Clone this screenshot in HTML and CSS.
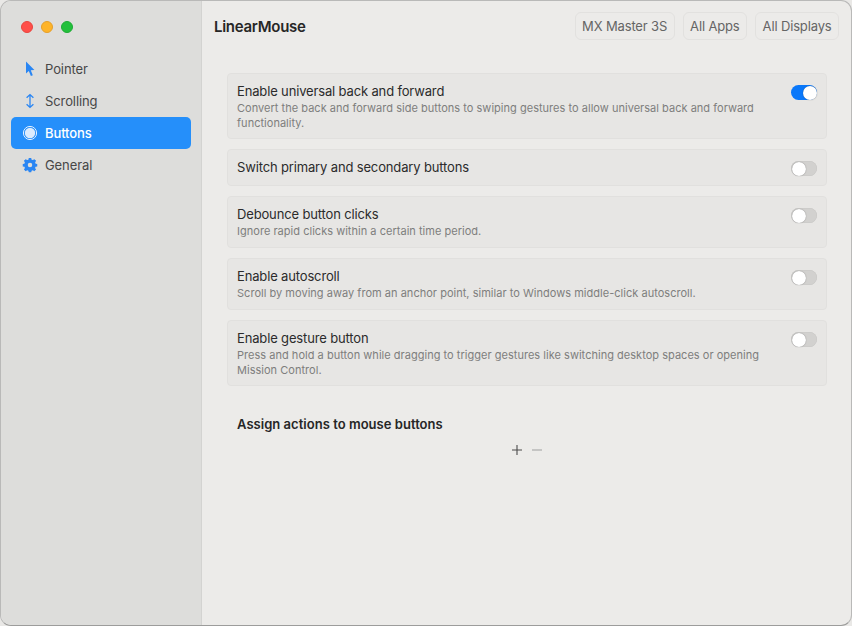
FILE: index.html
```html
<!DOCTYPE html>
<html lang="en">
<head>
<meta charset="utf-8">
<title>LinearMouse</title>
<link rel="stylesheet" href="styles.css">
</head>
<body>
<div class="window">
  <aside class="sidebar">
    <div class="lights">
      <span class="light red"></span>
      <span class="light yellow"></span>
      <span class="light green"></span>
    </div>
    <nav class="nav">
      <div class="nav-item">
        <svg class="nav-icon" viewBox="0 0 16 16"><path class="fill" d="M4 .6 L4 12.4 L6.8 9.9 L8.9 15 L10.8 14.2 L8.8 9.3 L12.4 9 Z"/></svg>
        <span>Pointer</span>
      </div>
      <div class="nav-item">
        <svg class="nav-icon" viewBox="0 0 16 16"><path class="stroke" d="M8 1.6 V14.4 M4.6 4.8 L8 1.6 L11.4 4.8 M4.6 11.2 L8 14.4 L11.4 11.2"/></svg>
        <span>Scrolling</span>
      </div>
      <div class="nav-item active">
        <svg class="nav-icon" viewBox="0 0 16 16"><circle class="ring" cx="8" cy="8" r="6.6"/><circle class="dot" cx="8" cy="8" r="5.2"/></svg>
        <span>Buttons</span>
      </div>
      <div class="nav-item">
        <svg class="nav-icon" viewBox="-.5 -.4 17 17"><path class="fill" fill-rule="evenodd" d="M6.7 .6 H9.3 L9.7 2.4 L11 2.9 L12.7 1.9 L14.5 3.7 L13.4 5.4 L14 6.7 L15.7 7.1 V9.6 L13.9 10 L13.4 11.2 L14.4 12.9 L12.6 14.7 L11 13.6 L9.7 14.1 L9.3 15.8 H6.7 L6.3 14.1 L5 13.6 L3.4 14.7 L1.6 12.9 L2.6 11.2 L2.1 10 L.3 9.6 V7.1 L2 6.7 L2.6 5.4 L1.5 3.7 L3.3 1.9 L5 2.9 L6.3 2.4 Z M8 5.8 A2.4 2.4 0 1 0 8 10.6 A2.4 2.4 0 1 0 8 5.8 Z"/></svg>
        <span>General</span>
      </div>
    </nav>
  </aside>
  <main class="main">
    <header class="toolbar">
      <h1 class="app-title">LinearMouse</h1>
      <div class="pickers">
        <div class="picker">MX Master 3S</div>
        <div class="picker">All Apps</div>
        <div class="picker">All Displays</div>
      </div>
    </header>
    <section class="content">
      <div class="card tall">
        <div class="card-text">
          <div class="card-title">Enable universal back and forward</div>
          <div class="card-desc">Convert the back and forward side buttons to swiping gestures to allow universal back and forward functionality.</div>
        </div>
        <span class="switch on"><span class="knob"></span></span>
      </div>
      <div class="card single">
        <div class="card-text">
          <div class="card-title">Switch primary and secondary buttons</div>
        </div>
        <span class="switch"><span class="knob"></span></span>
      </div>
      <div class="card">
        <div class="card-text">
          <div class="card-title">Debounce button clicks</div>
          <div class="card-desc">Ignore rapid clicks within a certain time period.</div>
        </div>
        <span class="switch"><span class="knob"></span></span>
      </div>
      <div class="card">
        <div class="card-text">
          <div class="card-title">Enable autoscroll</div>
          <div class="card-desc">Scroll by moving away from an anchor point, similar to Windows middle-click autoscroll.</div>
        </div>
        <span class="switch"><span class="knob"></span></span>
      </div>
      <div class="card tall">
        <div class="card-text">
          <div class="card-title">Enable gesture button</div>
          <div class="card-desc">Press and hold a button while dragging to trigger gestures like switching desktop spaces or opening Mission Control.</div>
        </div>
        <span class="switch"><span class="knob"></span></span>
      </div>
      <div class="assign">
        <h2 class="assign-title">Assign actions to mouse buttons</h2>
        <div class="assign-tools">
          <svg class="tool" viewBox="0 0 12 12"><path class="tool-plus" d="M0 6 H12 M6 0 V12"/></svg>
          <svg class="tool" viewBox="0 0 12 12"><path class="tool-minus" d="M0 6 H12"/></svg>
        </div>
      </div>
    </section>
  </main>
</div>
</body>
</html>
```
FILE: styles.css
```css
* { box-sizing: border-box; }
html, body { margin: 0; height: 100%; background: #e9e8e6; }
body { font-family: Inter, "Liberation Sans", sans-serif; overflow: hidden; }
.window {
  width: 852px; height: 626px; display: flex; overflow: hidden;
  border-radius: 11px; border: 1px solid #b9b9b8; border-bottom-color: #9c9c9b;
  background: #ecebe9;
}
.sidebar {
  width: 201px; flex: none; background: #dddddb;
  border-right: 1px solid #d3d3d1; padding: 0 10px;
}
.lights { height: 52px; display: flex; gap: 8px; padding: 20px 0 0 10px; }
.light { width: 12px; height: 12px; border-radius: 50%; border: 1px solid; }
.red { background: #ff4f4a; border-color: #e8453f; }
.yellow { background: #feb429; border-color: #e59f2b; }
.green { background: #23c03c; border-color: #1eab35; }
.nav { display: flex; flex-direction: column; }
.nav-item {
  height: 32px; display: flex; align-items: center; gap: 7px; padding: 0 11px;
  border-radius: 5px; font-size: 13px; font-weight: 400; color: #474747;
  letter-spacing: -.1px;
}
.nav-icon { width: 16px; height: 16px; flex: none; }
.fill { fill: #2a86f3; }
.stroke { fill: none; stroke: #2a86f3; stroke-width: 1.3; }
.active { background: #258ffa; color: #fff; font-weight: 500; }
.ring { fill: none; stroke: #e4f0fe; stroke-width: 1; }
.dot { fill: #dcebfd; }
.main { flex: 1; min-width: 0; display: flex; flex-direction: column; }
.toolbar {
  height: 52px; flex: none; display: flex; align-items: center;
  justify-content: space-between; padding: 0 12px 2px 12px;
}
.app-title { margin: 0; font-size: 15px; font-weight: 600; color: #262626; letter-spacing: -.28px; }
.pickers { display: flex; gap: 8px; }
.picker {
  height: 28px; padding: 0 6.5px; display: flex; align-items: center;
  border: 1px solid #e2e1df; border-radius: 6px; font-size: 13px; color: #656565;
  letter-spacing: -.15px;
}
.content { padding: 20px 24px 0 25px; display: flex; flex-direction: column; gap: 10px; }
.card {
  height: 52px; display: flex; justify-content: space-between; align-items: flex-start;
  padding: 9px 9px 0 9px; background: #e7e6e4; border: 1px solid #e1e0de; border-radius: 4px;
}
.tall { height: 66px; }
.single { height: 37px; }
.card-text { width: 540px; }
.card-title { font-size: 13px; line-height: 16px; color: #2b2b2b; letter-spacing: -.15px; }
.card-desc { font-size: 11px; line-height: 15px; margin-top: 2px; color: #7e7e7d; letter-spacing: .025px; }
.switch {
  width: 26px; height: 15px; margin-top: 2px; border-radius: 8px; background: #d2d1cf;
  display: flex; align-items: center; justify-content: flex-start; padding: 0 .5px;
  box-shadow: inset 0 0 0 .5px #c8c7c5;
}
.knob { width: 14px; height: 14px; border-radius: 50%; background: #fff; box-shadow: 0 0 1px #00000080; }
.on { background: #0a78fa; justify-content: flex-end; box-shadow: none; }
.assign { padding: 20px 10px 0 10px; display: flex; flex-direction: column; }
.assign-title { margin: 0; font-size: 13px; line-height: 16px; font-weight: 600; color: #262626; letter-spacing: .03px; }
.assign-tools { display: flex; justify-content: center; gap: 10px; margin-top: 13px; padding-right: 1px; }
.tool { width: 10px; height: 10px; }
.tool-plus { fill: none; stroke: #4a4a4a; stroke-width: 1.3; }
.tool-minus { fill: none; stroke: #a5a5a4; stroke-width: 1.3; }
```
